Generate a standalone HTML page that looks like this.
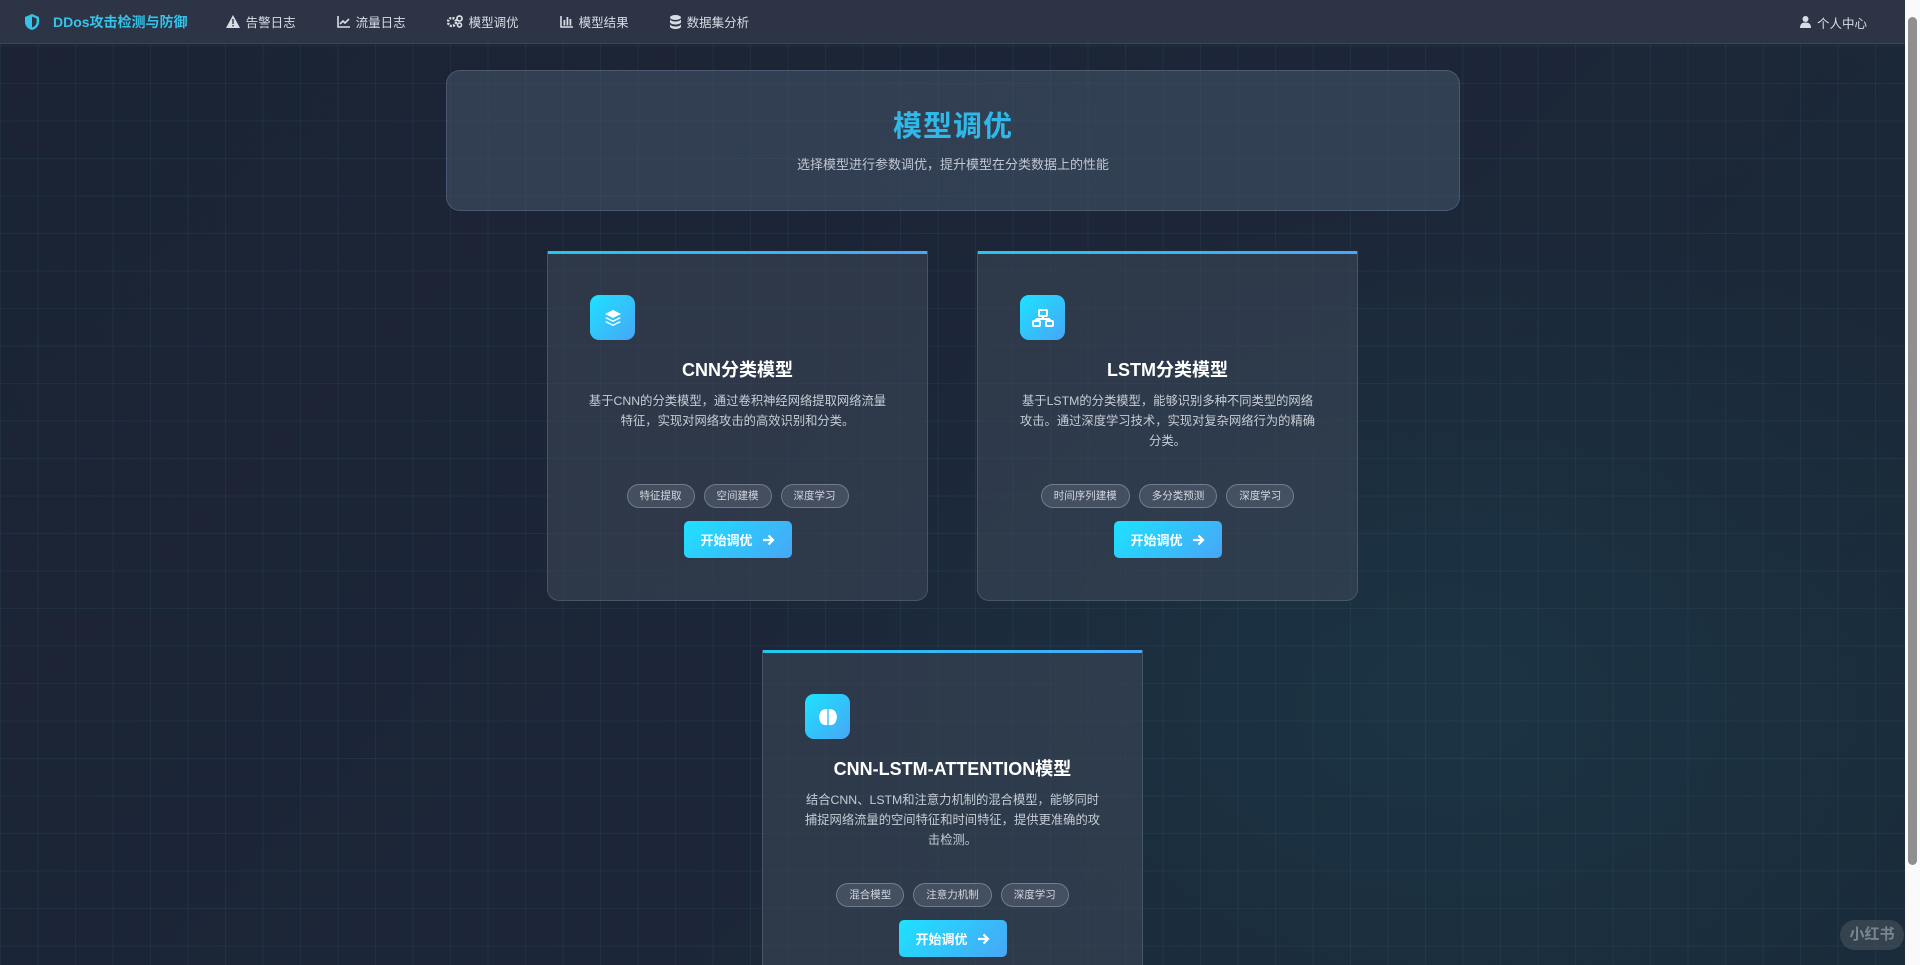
<!DOCTYPE html>
<html><head><meta charset="utf-8"><style>
*{margin:0;padding:0;box-sizing:border-box}
html,body{width:1920px;height:965px;overflow:hidden}
body{font-family:"Liberation Sans","Noto Sans CJK SC",sans-serif;color:#fff;position:relative;
background:
linear-gradient(rgba(80,140,180,.10) 1px,transparent 1px) 0 8px/37.5px 37.5px,
linear-gradient(90deg,rgba(80,140,180,.10) 1px,transparent 1px) 0 0/37.5px 37.5px,
radial-gradient(ellipse 700px 500px at 1450px 700px,#1b3444 0%,rgba(27,52,68,0) 100%),
linear-gradient(135deg,#1b2334 0%,#1c2638 50%,#1a2a38 100%);}
.nav{position:absolute;left:0;top:0;width:1905px;height:44px;background:#2c3445;border-bottom:1px solid #3d4657;display:flex;align-items:center;font-size:12.5px;color:#d8dde5}
.nav .brand{color:#35c3ea;font-size:14px;font-weight:bold;margin-left:24px;display:flex;align-items:center;gap:13px;margin-right:38px}
.nav .it{display:flex;align-items:center;gap:6px;margin-right:41px}
.nav .user{position:absolute;right:38px;top:0;height:44px;display:flex;align-items:center;gap:6px}
.sb{position:absolute;right:0;top:0;width:15px;height:965px;background:#fafafa}
.sb .th{position:absolute;left:3px;top:17px;width:9px;height:848px;background:#8f8f8f;border-radius:5px}
.hdr{position:absolute;left:446px;top:70px;width:1014px;height:141px;background:rgba(70,85,108,.55);border:1px solid rgba(120,140,170,.35);border-radius:14px;text-align:center}
.hdr h1{color:#2fb8e8;font-size:29px;margin-top:32px;font-weight:bold;letter-spacing:1px}
.hdr p{color:#c2c8d2;font-size:13px;margin-top:9px}
.card{position:absolute;width:381px;height:350px;background:rgba(62,72,90,.55);border:1px solid rgba(120,135,160,.35);border-top:none;border-radius:0 0 12px 12px;display:flex;flex-direction:column;align-items:center;padding:44px 38px 42px}
.card:before{content:"";position:absolute;left:0;top:0;right:0;height:3px;background:linear-gradient(90deg,#22c8ee,#46a8f8)}
.ic{align-self:flex-start;margin-left:4px;width:45px;height:45px;border-radius:9px;background:linear-gradient(135deg,#1de2ff,#47a6f6);display:flex;align-items:center;justify-content:center}
.card h3{font-size:18px;font-weight:bold;margin-top:16px}
.card .d{font-size:12.3px;color:#c6ccd5;text-align:center;line-height:20px;margin-top:9px}
.tags{margin-top:auto;display:flex;gap:9px}
.tag{font-size:10.5px;color:#d4d9e0;border:1px solid rgba(200,210,225,.35);background:rgba(90,100,118,.5);border-radius:12px;height:24px;line-height:22px;padding:0 12px}
.btn{margin-top:13px;width:108px;height:37px;border-radius:5px;background:linear-gradient(135deg,#1de2ff,#47a6f6);font-size:13px;font-weight:bold;display:flex;align-items:center;justify-content:center;gap:9px}
.wm{position:absolute;left:1840px;top:920px;width:64px;height:30px;border-radius:15px;background:rgba(80,90,100,.5);color:rgba(140,150,160,.8);font-size:15px;font-weight:bold;text-align:center;line-height:30px}
</style></head><body>
<div class="nav">
<div class="brand"><svg width="16" height="18" viewBox="0 0 16 18"><path d="M8 1L1 4v5c0 4 3 7 7 8 4-1 7-4 7-8V4z" fill="#35c3ea"/><path d="M8 3.5v11c2.6-.9 4.6-3 4.6-5.8V5.5z" fill="#2c3445"/></svg>DDos攻击检测与防御</div>
<div class="it"><svg width="14" height="13" viewBox="0 0 14 13"><path d="M7 0L14 13H0z" fill="#d8dde5"/><rect x="6.3" y="4" width="1.4" height="5" fill="#2c3445"/><rect x="6.3" y="10" width="1.4" height="1.4" fill="#2c3445"/></svg>告警日志</div>
<div class="it"><svg width="13" height="12" viewBox="0 0 13 12"><path d="M1 0v11h12" stroke="#d8dde5" stroke-width="1.6" fill="none"/><path d="M3 8l3-3 2 2 4-4" stroke="#d8dde5" stroke-width="1.6" fill="none"/></svg>流量日志</div>
<div class="it"><svg width="16" height="13" viewBox="0 0 16 13"><circle cx="5" cy="7" r="4" fill="none" stroke="#d8dde5" stroke-width="2.5" stroke-dasharray="2 1.2"/><circle cx="12.5" cy="3.5" r="2.5" fill="none" stroke="#d8dde5" stroke-width="1.8"/><circle cx="12.5" cy="10" r="2" fill="none" stroke="#d8dde5" stroke-width="1.6"/></svg>模型调优</div>
<div class="it"><svg width="13" height="12" viewBox="0 0 13 12"><path d="M1 0v11h12" stroke="#d8dde5" stroke-width="1.6" fill="none"/><rect x="3.5" y="4" width="1.8" height="5.5" fill="#d8dde5"/><rect x="6.5" y="1" width="1.8" height="8.5" fill="#d8dde5"/><rect x="9.5" y="3" width="1.8" height="6.5" fill="#d8dde5"/></svg>模型结果</div>
<div class="it"><svg width="11" height="14" viewBox="0 0 11 14"><ellipse cx="5.5" cy="2.5" rx="5.5" ry="2.5" fill="#d8dde5"/><path d="M0 4v3c0 1.4 2.5 2.5 5.5 2.5S11 8.4 11 7V4c0 1.4-2.5 2.5-5.5 2.5S0 5.4 0 4zM0 9v2.5C0 12.9 2.5 14 5.5 14S11 12.9 11 11.5V9c0 1.4-2.5 2.5-5.5 2.5S0 10.4 0 9z" fill="#d8dde5"/></svg>数据集分析</div>
<div class="user"><svg width="11" height="12" viewBox="0 0 11 12"><circle cx="5.5" cy="3" r="3" fill="#d8dde5"/><path d="M0 12c0-4 2-5.5 5.5-5.5S11 8 11 12z" fill="#d8dde5"/></svg>个人中心</div>
</div>
<div class="hdr"><h1>模型调优</h1><p>选择模型进行参数调优，提升模型在分类数据上的性能</p></div>

<div class="card" style="left:547px;top:251px">
<div class="ic"><svg width="20" height="20" viewBox="0 0 20 20"><path d="M10 2l8 4-8 4-8-4z" fill="#fff"/><path d="M3.5 9.3L10 12.5l6.5-3.2L18 10l-8 4-8-4z" fill="#fff"/><path d="M3.5 13.3L10 16.5l6.5-3.2L18 14l-8 4-8-4z" fill="#fff"/></svg></div>
<h3>CNN分类模型</h3>
<div class="d">基于CNN的分类模型，通过卷积神经网络提取网络流量特征，实现对网络攻击的高效识别和分类。</div>
<div class="tags"><span class="tag">特征提取</span><span class="tag">空间建模</span><span class="tag">深度学习</span></div>
<div class="btn">开始调优 <svg width="13" height="12" viewBox="0 0 13 12"><path d="M1 6h10M6.5 1.5L11 6l-4.5 4.5" stroke="#fff" stroke-width="2.2" fill="none"/></svg></div>
</div>

<div class="card" style="left:977px;top:251px">
<div class="ic"><svg width="22" height="20" viewBox="0 0 22 20"><rect x="7" y="2" width="8" height="6" rx="1" fill="none" stroke="#fff" stroke-width="2"/><path d="M11 8v3M4 11h14M4 11v2M18 11v2" stroke="#fff" stroke-width="2" fill="none"/><rect x="1" y="13" width="7" height="5" rx="1" fill="none" stroke="#fff" stroke-width="2"/><rect x="14" y="13" width="7" height="5" rx="1" fill="none" stroke="#fff" stroke-width="2"/></svg></div>
<h3>LSTM分类模型</h3>
<div class="d">基于LSTM的分类模型，能够识别多种不同类型的网络攻击。通过深度学习技术，实现对复杂网络行为的精确分类。</div>
<div class="tags"><span class="tag">时间序列建模</span><span class="tag">多分类预测</span><span class="tag">深度学习</span></div>
<div class="btn">开始调优 <svg width="13" height="12" viewBox="0 0 13 12"><path d="M1 6h10M6.5 1.5L11 6l-4.5 4.5" stroke="#fff" stroke-width="2.2" fill="none"/></svg></div>
</div>

<div class="card" style="left:762px;top:650px">
<div class="ic"><svg width="20" height="18" viewBox="0 0 20 18"><path d="M9.3 1C6 1 3 2 2 5 .5 8 1 12 3 15c1.5 2 4 2.5 6.3 2zM10.7 1C14 1 17 2 18 5c1.5 3 1 7-1 10-1.5 2-4 2.5-6.3 2z" fill="#fff"/></svg></div>
<h3>CNN-LSTM-ATTENTION模型</h3>
<div class="d">结合CNN、LSTM和注意力机制的混合模型，能够同时捕捉网络流量的空间特征和时间特征，提供更准确的攻击检测。</div>
<div class="tags"><span class="tag">混合模型</span><span class="tag">注意力机制</span><span class="tag">深度学习</span></div>
<div class="btn">开始调优 <svg width="13" height="12" viewBox="0 0 13 12"><path d="M1 6h10M6.5 1.5L11 6l-4.5 4.5" stroke="#fff" stroke-width="2.2" fill="none"/></svg></div>
</div>

<div class="wm">小红书</div>
<div class="sb"><div class="th"></div></div>
</body></html>
